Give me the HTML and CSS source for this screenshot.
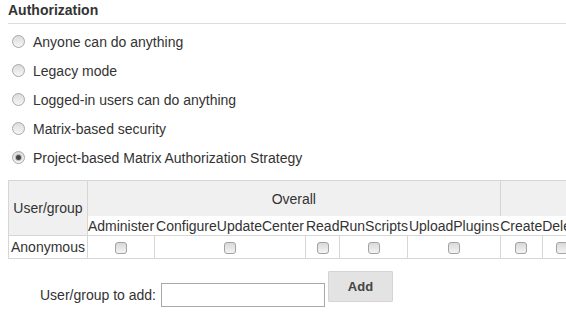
FILE: index.html
```html
<!DOCTYPE html>
<html lang="en">
<head>
    <meta charset="UTF-8">
    <title>Configure Global Security</title>
    <link rel="stylesheet" href="styles.css">
</head>
<body>

    <div class="section">
        <!-- Section header -->
        <h3 class="section-title">Authorization</h3>

        <!-- Strategy choices -->
        <div class="strategy-list">
            <label class="strategy"><input type="radio" name="authorization"> Anyone can do anything</label>
            <label class="strategy"><input type="radio" name="authorization"> Legacy mode</label>
            <label class="strategy"><input type="radio" name="authorization"> Logged-in users can do anything</label>
            <label class="strategy"><input type="radio" name="authorization"> Matrix-based security</label>
            <label class="strategy"><input type="radio" name="authorization" checked> Project-based Matrix Authorization Strategy</label>
        </div>

        <!-- Permission matrix -->
        <table class="matrix">
            <tr class="group-row">
                <th rowspan="2" class="user-head">User/group</th>
                <th colspan="5">Overall</th>
                <th colspan="5">Credentials</th>
            </tr>
            <tr class="perm-row">
                <th>Administer</th>
                <th class="pad-2">ConfigureUpdateCenter</th>
                <th>Read</th>
                <th>RunScripts</th>
                <th class="pad-1">UploadPlugins</th>
                <th>Create</th>
                <th>Delete</th>
                <th>ManageDomains</th>
                <th>Update</th>
                <th>View</th>
            </tr>
            <tr class="user-row">
                <td class="user-name">Anonymous</td>
                <td><input type="checkbox"></td>
                <td><input type="checkbox"></td>
                <td><input type="checkbox"></td>
                <td><input type="checkbox"></td>
                <td><input type="checkbox"></td>
                <td><input type="checkbox"></td>
                <td><input type="checkbox"></td>
                <td><input type="checkbox"></td>
                <td><input type="checkbox"></td>
                <td><input type="checkbox"></td>
            </tr>
        </table>

        <!-- Add a user or group -->
        <div class="add-row">
            <div class="add-field">
                <span class="add-label">User/group to add:</span>
                <input type="text" class="add-input">
            </div>
            <button class="add-button">Add</button>
        </div>
    </div>

</body>
</html>
```

FILE: styles.css
```css
html {
    overflow: hidden;
}

body {
    font-family: 'Liberation Sans', Arial, sans-serif;
    font-size: 14px;
    color: #333;
    background-color: #ffffff;
    margin: 0;
    padding: 0;
}

.section {
    padding-left: 8px;
}

.section-title {
    margin: 0;
    padding: 1px 0 4px;
    font-size: 14px;
    line-height: 18px;
    font-weight: bold;
    border-bottom: 1px solid #dcdcdc;
}

.strategy-list {
    display: flex;
    flex-direction: column;
    padding-top: 3px;
}

.strategy {
    display: flex;
    align-items: center;
    gap: 8px;
    height: 29px;
    padding-left: 4px;
}

.strategy input {
    -webkit-appearance: none;
    appearance: none;
    margin: 0;
    width: 13px;
    height: 13px;
    border-radius: 50%;
    border: 1px solid #a8a8a8;
    background: linear-gradient(#dcdcdc, #f6f6f6);
    display: flex;
    align-items: center;
    justify-content: center;
}

.strategy input:checked::after {
    content: "";
    width: 5px;
    height: 5px;
    border-radius: 50%;
    background-color: #444;
    box-shadow: 0 0 0 1px #bbb;
}

.matrix {
    border-collapse: collapse;
    margin-top: 8px;
    white-space: nowrap;
}

.matrix th,
.matrix td {
    border: 1px solid #d6d6d6;
    padding: 0;
    font-weight: normal;
    text-align: center;
}

.group-row th {
    background-color: #f0f0f0;
    height: 35px;
    border-bottom: none;
}

.group-row .user-head {
    border-bottom: 1px solid #d6d6d6;
    padding: 0 2px;
}

.perm-row th {
    height: 19px;
    border-top: none;
    border-left: none;
    border-right: none;
    background-color: #ffffff;
}

.perm-row .pad-2 {
    padding: 0 2px;
}

.perm-row .pad-1 {
    padding: 0 1px;
}

.user-row td {
    height: 22px;
}

.matrix .user-name {
    padding: 0 2px;
}

.matrix input[type="checkbox"] {
    -webkit-appearance: none;
    appearance: none;
    margin: 4px 0 0;
    width: 12px;
    height: 12px;
    border: 1px solid #a3a3a3;
    border-radius: 3px;
    background: linear-gradient(#d8d8d8, #f4f4f4);
}

.add-row {
    display: flex;
    align-items: flex-start;
    gap: 3px;
    margin-top: 12px;
    padding-left: 32px;
}

.add-field {
    display: flex;
    align-items: center;
    gap: 5px;
    margin-top: 12px;
}

.add-input {
    width: 160px;
    height: 20px;
    margin: 0;
    padding: 1px;
    border: 1px solid #a9a9a9;
}

.add-button {
    width: 65px;
    height: 31px;
    margin: 0;
    font-family: inherit;
    font-size: 13px;
    font-weight: bold;
    color: #444;
    background-color: #e3e3e3;
    border: 1px solid #d4d4d4;
    border-radius: 1px;
}
```
